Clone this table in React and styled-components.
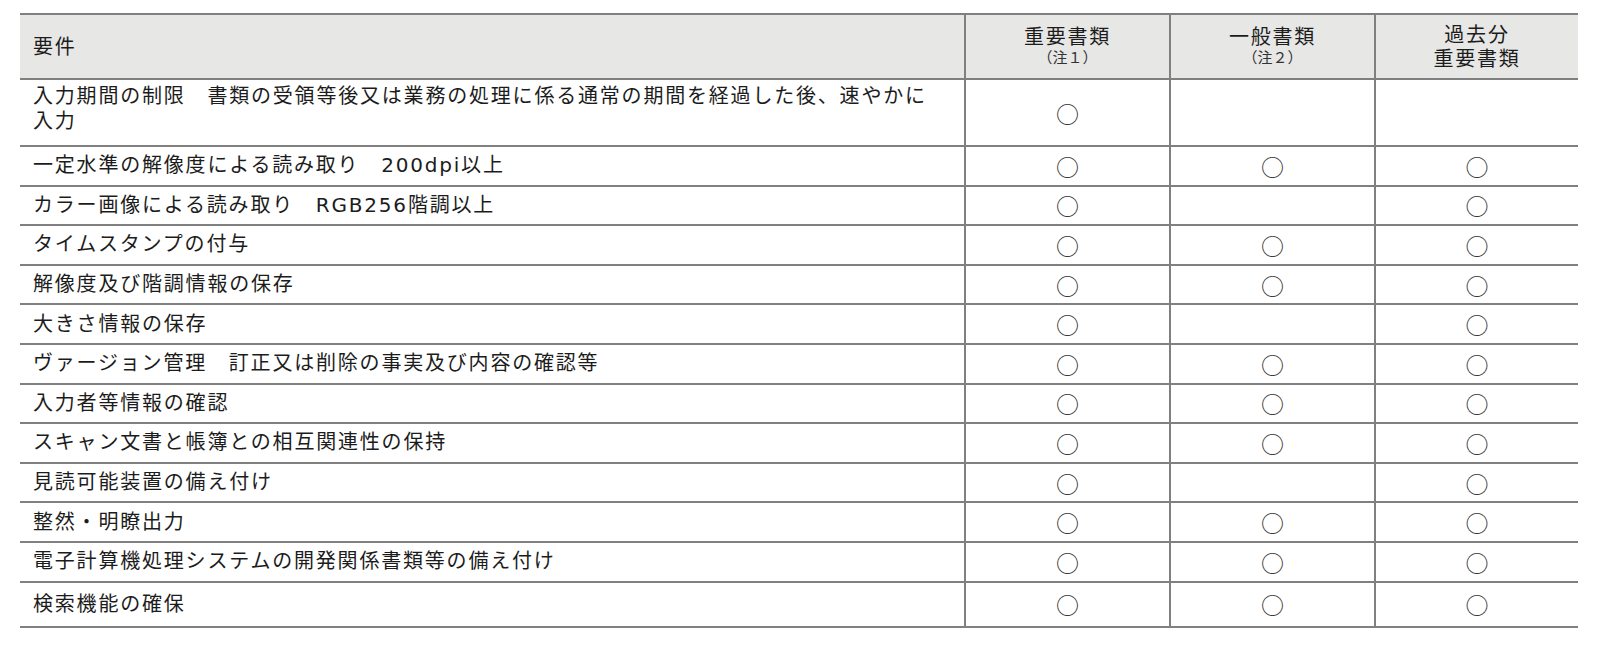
import React from "react";
import styled, { createGlobalStyle } from "styled-components";

const GlobalStyle = createGlobalStyle`
  html, body {
    margin: 0;
    padding: 0;
    background: #ffffff;
    overflow: hidden;
  }
  body {
    font-family: "DejaVu Sans", "Noto Sans CJK JP", sans-serif;
    color: #1c1c1c;
  }
`;

const rows = [
  { label: ["入力期間の制限　書類の受領等後又は業務の処理に係る通常の期間を経過した後、速やかに", "入力"], marks: [true, false, false], tall: true },
  { label: ["一定水準の解像度による読み取り　200dpi以上"], marks: [true, true, true] },
  { label: ["カラー画像による読み取り　RGB256階調以上"], marks: [true, false, true] },
  { label: ["タイムスタンプの付与"], marks: [true, true, true] },
  { label: ["解像度及び階調情報の保存"], marks: [true, true, true] },
  { label: ["大きさ情報の保存"], marks: [true, false, true] },
  { label: ["ヴァージョン管理　訂正又は削除の事実及び内容の確認等"], marks: [true, true, true] },
  { label: ["入力者等情報の確認"], marks: [true, true, true] },
  { label: ["スキャン文書と帳簿との相互関連性の保持"], marks: [true, true, true] },
  { label: ["見読可能装置の備え付け"], marks: [true, false, true] },
  { label: ["整然・明瞭出力"], marks: [true, true, true] },
  { label: ["電子計算機処理システムの開発関係書類等の備え付け"], marks: [true, true, true] },
  { label: ["検索機能の確保"], marks: [true, true, true], last: true },
];

const Page = styled.div`
  width: 1600px;
  padding: 13px 0 0 20px;
  box-sizing: border-box;
`;

const Table = styled.table`
  width: 1558px;
  border-collapse: collapse;
  table-layout: fixed;
  font-size: 20px;
  letter-spacing: 1.8px;
`;

const HeadRow = styled.tr`
  background: #e7e7e6;
  height: 65px;
`;

const HeadCell = styled.th`
  font-weight: 400;
  text-align: ${(p) => (p.$left ? "left" : "center")};
  padding: ${(p) => (p.$left ? "0 13px" : "0 6px")};
  line-height: 24px;
  border-top: 2px solid #808080;
  border-bottom: 2px solid #808080;
  border-left: ${(p) => (p.$left ? "none" : "2px solid #808080")};
  vertical-align: middle;
`;

const Note = styled.span`
  display: block;
  font-size: 15px;
  line-height: 19px;
  letter-spacing: 0;
  color: #333;
`;

const Row = styled.tr`
  height: ${(p) => (p.$tall ? "67px" : p.$last ? "45px" : "39.6px")};
`;

const LabelCell = styled.td`
  padding: ${(p) => (p.$tall ? "4px 13px 9px" : "0 13px")};
  line-height: 25px;
  border-bottom: 2px solid #808080;
  vertical-align: ${(p) => (p.$tall ? "top" : "middle")};
  white-space: nowrap;
`;

const MarkCell = styled.td`
  text-align: center;
  border-bottom: 2px solid #808080;
  border-left: 2px solid #808080;
  vertical-align: middle;
  font-family: "Noto Sans CJK JP", sans-serif;
  font-size: 23px;
  line-height: 26px;
  letter-spacing: 0;
  color: #333;
`;

export default function App() {
  return (
    <Page>
      <GlobalStyle />
      <Table>
        <colgroup>
          <col style={{ width: 945 }} />
          <col style={{ width: 205 }} />
          <col style={{ width: 205 }} />
          <col style={{ width: 203 }} />
        </colgroup>
        <thead>
          <HeadRow>
            <HeadCell $left>要件</HeadCell>
            <HeadCell>
              重要書類
              <Note>（注１）</Note>
            </HeadCell>
            <HeadCell>
              一般書類
              <Note>（注２）</Note>
            </HeadCell>
            <HeadCell>
              過去分
              <br />
              重要書類
            </HeadCell>
          </HeadRow>
        </thead>
        <tbody>
          {rows.map((r, i) => (
            <Row key={i} $tall={r.tall} $last={r.last}>
              <LabelCell $tall={r.tall}>
                {r.label.map((line, j) => (
                  <React.Fragment key={j}>
                    {j > 0 && <br />}
                    {line}
                  </React.Fragment>
                ))}
              </LabelCell>
              {r.marks.map((m, k) => (
                <MarkCell key={k}>{m ? "○" : ""}</MarkCell>
              ))}
            </Row>
          ))}
        </tbody>
      </Table>
    </Page>
  );
}
